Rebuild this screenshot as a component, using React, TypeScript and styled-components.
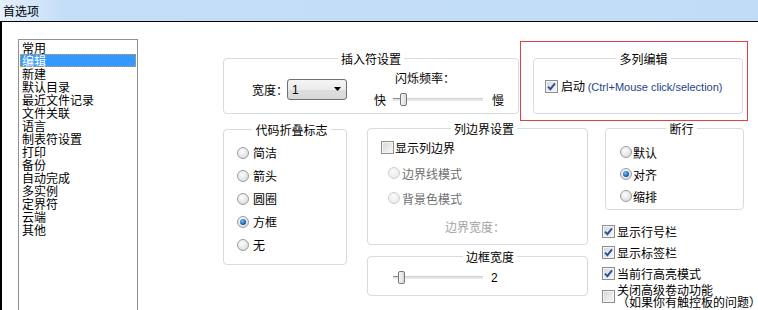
import React from "react";
import styled, { createGlobalStyle, css } from "styled-components";

const GlobalStyle = createGlobalStyle`
  * { box-sizing: border-box; }
  html, body { margin: 0; padding: 0; background: #fff; overflow: hidden; }
  body {
    font-family: "Noto Sans CJK SC", "Liberation Sans", sans-serif;
    font-size: 12px;
    color: #000;
  }
`;

const Window = styled.div`
    width: 758px;
    height: 310px;
    display: flex;
    flex-direction: column;
    background: #fff;
    overflow: hidden;
`;

const TitleBar = styled.div`
    flex: none;
    height: 22px;
    padding-left: 3px;
    line-height: 21px;
    font-size: 12px;
    background: linear-gradient(90deg, #e4f0fc 0, #c4def7 64px, #c1dcf6 100%);
    border-bottom: 1px solid #000;
`;

const Body = styled.div`
    flex: 1;
    min-height: 0;
    display: flex;
    border-left: 2px solid #000;
`;

const ListBox = styled.div`
    flex: none;
    width: 120px;
    height: 300px;
    margin: 17px 0 0 16px;
    padding: 1px;
    border: 1px solid #8e9093;
`;

const ListItem = styled.div<{ $selected?: boolean }>`
    height: 13px;
    line-height: 13px;
    padding-left: 2px;
    white-space: nowrap;
    ${({ $selected }) =>
        $selected &&
        css`
            background: #3399ff;
            color: #fff;
            outline: 1px dotted #e09a3c;
            outline-offset: -1px;
        `}
`;

const Content = styled.div`
    display: flex;
    flex-direction: column;
    margin-left: 85px;
`;

const TopRow = styled.div`
    display: flex;
    align-items: flex-start;
    margin-top: 19px;
`;

const BottomRow = styled.div`
    display: flex;
    align-items: flex-start;
    margin-top: 1px;
`;

const Column = styled.div<{ $width?: number; $gapRight?: number }>`
    flex: none;
    display: flex;
    flex-direction: column;
    width: ${({ $width }) => ($width ? `${$width}px` : "auto")};
    margin-right: ${({ $gapRight = 0 }) => $gapRight}px;
`;

const Group = styled.fieldset<{ $w: number; $h: number; $pad: string; $mt?: number; $ml?: number }>`
    flex: none;
    margin: ${({ $mt = 0 }) => $mt}px 0 0 ${({ $ml = 0 }) => $ml}px;
    min-width: 0;
    width: ${({ $w }) => $w}px;
    height: ${({ $h }) => $h}px;
    padding: ${({ $pad }) => $pad};
    border: 1px solid #d3dbe3;
    border-radius: 4px;
`;

const Legend = styled.legend`
    margin: 0 auto;
    padding: 0 3px;
    height: 13px;
    line-height: 13px;
    font-size: 12px;
`;

const HighlightBox = styled.div`
    flex: none;
    width: 228px;
    height: 80px;
    margin-left: 1px;
    padding: 10px 0 0 12px;
    border: 1px solid #e5403f;
`;

const Row = styled.div<{ $h: number; $gap: number; $mt?: number; $disabled?: boolean; $faint?: boolean }>`
    display: flex;
    align-items: center;
    height: ${({ $h }) => $h}px;
    margin-top: ${({ $mt = 0 }) => $mt}px;
    gap: ${({ $gap }) => $gap}px;
    white-space: nowrap;
    line-height: 13px;
    color: ${({ $disabled, $faint }) => ($faint ? "#a3a3a3" : $disabled ? "#6f6f6f" : "#000")};
`;

const CheckBox = styled.span`
    flex: none;
    width: 13px;
    height: 13px;
    display: flex;
    align-items: center;
    justify-content: center;
    border: 1px solid #8e8f8f;
    background: linear-gradient(135deg, #d6d6d6, #f9f9f9);
    box-shadow: inset 0 0 0 1px #f4f4f4;
`;

const Radio = styled.span<{ $checked?: boolean; $disabled?: boolean }>`
    position: relative;
    flex: none;
    width: 12px;
    height: 12px;
    border-radius: 50%;
    border: 1px solid ${({ $disabled }) => ($disabled ? "#cfcfcf" : "#9c9c9c")};
    background: ${({ $disabled }) =>
        $disabled
            ? "radial-gradient(circle at 40% 35%, #fafafa, #e6e6e6)"
            : "radial-gradient(circle at 40% 35%, #fdfdfd, #d4d4d4)"};
    ${({ $checked }) =>
        $checked &&
        css`
            &::after {
                content: "";
                position: absolute;
                left: 2px;
                top: 2px;
                width: 6px;
                height: 6px;
                border-radius: 50%;
                background: radial-gradient(circle at 40% 35%, #7cc2f8, #1560b0 60%, #0b3a78);
            }
        `}
`;

const Label = styled.span<{ $w?: number }>`
    flex: none;
    width: ${({ $w }) => ($w ? `${$w}px` : "auto")};
    white-space: nowrap;
`;

const Hint = styled.span`
    font-family: "Liberation Sans", sans-serif;
    font-size: 11px;
    color: #1f3f8c;
`;

const Select = styled.div`
    flex: none;
    width: 60px;
    height: 21px;
    display: flex;
    align-items: center;
    justify-content: space-between;
    padding: 0 4px 0 4px;
    border: 1px solid #707070;
    border-radius: 3px;
    background: linear-gradient(#f4f4f4, #ebebeb 50%, #dedede 51%, #d8d8d8);
    font-family: "Liberation Sans", sans-serif;
    font-size: 12px;
`;

const InsertBody = styled.div`
    display: flex;
    align-items: flex-start;
`;

const WidthPart = styled.div`
    display: flex;
    align-items: center;
    margin: 14px 0 0 28px;
`;

const BlinkPart = styled.div`
    display: flex;
    flex-direction: column;
    margin: 6px 0 0 27px;
`;

const BlinkTitle = styled.div`
    margin-left: 21px;
    height: 13px;
    line-height: 13px;
`;

const SliderRow = styled.div<{ $mt: number }>`
    display: flex;
    align-items: center;
    height: 13px;
    margin-top: ${({ $mt }) => $mt}px;
    white-space: nowrap;
`;

const Slider = styled.div<{ $w: number; $ml: number; $mr: number }>`
    position: relative;
    flex: none;
    width: ${({ $w }) => $w}px;
    height: 13px;
    margin: 0 ${({ $mr }) => $mr}px 0 ${({ $ml }) => $ml}px;
`;

const Track = styled.div`
    position: absolute;
    left: 0;
    right: 0;
    top: 5px;
    height: 3px;
    background: #e7e7e7;
    border-top: 1px solid #d0d0d0;
`;

const TrackFill = styled.div`
    position: absolute;
    left: 0;
    top: 5px;
    height: 1px;
    background: #8a8a8a;
`;

const Thumb = styled.div`
    position: absolute;
    top: 0;
    width: 7px;
    height: 13px;
    border: 1px solid #777;
    border-radius: 2px;
    background: linear-gradient(90deg, #f6f6f6, #dadada);
`;

const Value = styled.span`
    font-family: "Liberation Sans", sans-serif;
    font-size: 12px;
`;

const CheckList = styled.div`
    display: flex;
    flex-direction: column;
    margin: 11px 0 0 1px;
`;

const TwoLines = styled.div`
    line-height: 12px;
    white-space: nowrap;
`;

const Check = () => (
    <svg width="9" height="9" viewBox="0 0 9 9">
        <path d="M1 4.6 L3.4 7.2 L8 1.4" fill="none" stroke="#2b4f9e" strokeWidth="1.9" />
    </svg>
);

const Arrow = () => (
    <svg width="8" height="5" viewBox="0 0 8 5">
        <polygon points="0,0 7,0 3.5,4" fill="#000" />
    </svg>
);

const HSlider = ({ width, pos, ml, mr }: { width: number; pos: number; ml: number; mr: number }) => (
    <Slider $w={width} $ml={ml} $mr={mr}>
        <Track />
        <TrackFill style={{ width: pos }} />
        <Thumb style={{ left: pos }} />
    </Slider>
);

const pages = [
    "常用",
    "编辑",
    "新建",
    "默认目录",
    "最近文件记录",
    "文件关联",
    "语言",
    "制表符设置",
    "打印",
    "备份",
    "自动完成",
    "多实例",
    "定界符",
    "云端",
    "其他",
];

const foldMarks = ["简洁", "箭头", "圆圈", "方框", "无"];
const wrapModes = ["默认", "对齐", "缩排"];

export default function App() {
    return (
        <Window>
            <GlobalStyle />
            <TitleBar>首选项</TitleBar>
            <Body>
                <ListBox>
                    {pages.map((p) => (
                        <ListItem key={p} $selected={p === "编辑"}>
                            {p}
                        </ListItem>
                    ))}
                </ListBox>
                <Content>
                    <TopRow>
                        <Group $w={296} $h={62} $pad="0" $mt={11}>
                            <Legend>插入符设置</Legend>
                            <InsertBody>
                                <WidthPart>
                                    <Label $w={35}>宽度：</Label>
                                    <Select>
                                        <span>1</span>
                                        <Arrow />
                                    </Select>
                                </WidthPart>
                                <BlinkPart>
                                    <BlinkTitle>闪烁频率：</BlinkTitle>
                                    <SliderRow $mt={9}>
                                        <Label $w={12}>快</Label>
                                        <HSlider width={90} pos={7} ml={7} mr={9} />
                                        <Label>慢</Label>
                                    </SliderRow>
                                </BlinkPart>
                            </InsertBody>
                        </Group>
                        <HighlightBox>
                            <Group $w={210} $h={62} $pad="0 0 0 11px">
                                <Legend>多列编辑</Legend>
                                <Row $h={13} $gap={3} $mt={15}>
                                    <CheckBox>
                                        <Check />
                                    </CheckBox>
                                    <span>
                                        启动 <Hint>(Ctrl+Mouse click/selection)</Hint>
                                    </span>
                                </Row>
                            </Group>
                        </HighlightBox>
                    </TopRow>
                    <BottomRow>
                        <Column $width={124} $gapRight={20}>
                            <Group $w={124} $h={142} $pad="5px 0 0 13px" $mt={1}>
                                <Legend>代码折叠标志</Legend>
                                {foldMarks.map((m) => (
                                    <Row key={m} $h={23} $gap={4}>
                                        <Radio $checked={m === "方框"} />
                                        <span>{m}</span>
                                    </Row>
                                ))}
                            </Group>
                        </Column>
                        <Column $width={221} $gapRight={13}>
                            <Group $w={221} $h={123} $pad="0 0 0 13px">
                                <Legend>列边界设置</Legend>
                                <Row $h={13} $gap={1} $mt={6}>
                                    <CheckBox />
                                    <span>显示列边界</span>
                                </Row>
                                <Row $h={12} $gap={2} $mt={13} $disabled style={{ paddingLeft: 7 }}>
                                    <Radio $disabled />
                                    <span>边界线模式</span>
                                </Row>
                                <Row $h={12} $gap={2} $mt={13} $disabled style={{ paddingLeft: 7 }}>
                                    <Radio $disabled />
                                    <span>背景色模式</span>
                                </Row>
                                <Row $h={12} $gap={0} $mt={16} $faint style={{ paddingLeft: 64 }}>
                                    <span>边界宽度：</span>
                                </Row>
                            </Group>
                            <Group $w={221} $h={46} $pad="0 0 0 25px" $mt={5}>
                                <Legend>边框宽度</Legend>
                                <SliderRow $mt={8}>
                                    <HSlider width={90} pos={5} ml={0} mr={8} />
                                    <Value>2</Value>
                                </SliderRow>
                            </Group>
                        </Column>
                        <Column>
                            <Group $w={139} $h={88} $pad="6px 0 0 14px" $ml={4}>
                                <Legend>断行</Legend>
                                {wrapModes.map((m) => (
                                    <Row key={m} $h={22} $gap={1}>
                                        <Radio $checked={m === "对齐"} />
                                        <span>{m}</span>
                                    </Row>
                                ))}
                            </Group>
                            <CheckList>
                                {["显示行号栏", "显示标签栏", "当前行高亮模式"].map((c) => (
                                    <Row key={c} $h={21} $gap={2}>
                                        <CheckBox>
                                            <Check />
                                        </CheckBox>
                                        <span>{c}</span>
                                    </Row>
                                ))}
                                <Row $h={24} $gap={2}>
                                    <CheckBox />
                                    <TwoLines>
                                        关闭高级卷动功能
                                        <br />
                                        （如果你有触控板的问题）
                                    </TwoLines>
                                </Row>
                            </CheckList>
                        </Column>
                    </BottomRow>
                </Content>
            </Body>
        </Window>
    );
}
